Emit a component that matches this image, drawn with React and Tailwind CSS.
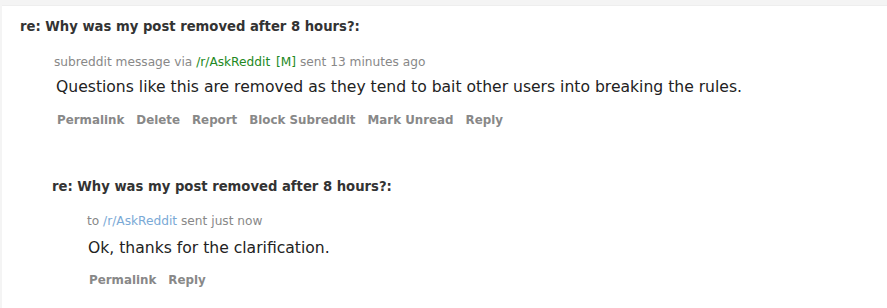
const font = { fontFamily: '"DejaVu Sans", Verdana, sans-serif' };

function Buttons({ items }) {
  return (
    <ul className="flex gap-[12px] text-[11.85px] leading-[18px] font-bold text-[#888]">
      {items.map((item) => (
        <li key={item}>
          <a href="#" className="hover:underline">{item}</a>
        </li>
      ))}
    </ul>
  );
}

export default function App() {
  return (
    <div className="min-h-[308px] bg-[#f4f4f4] pt-[5px] pl-[2px]" style={font}>
      <div className="min-h-[303px] bg-white border-t border-[#eee] pl-[18px] pt-[11px]">
        {/* original message */}
        <div>
          <h3 className="text-[13.2px] font-bold text-[#333] leading-[20px]">
            re: Why was my post removed after 8 hours?:
          </h3>
          <div className="pl-[34px] pt-[16px]">
            <p className="text-[12.2px] text-[#888] leading-[18px]">
              subreddit message via{" "}
              <a href="#" className="text-[#228822]">/r/AskReddit</a>{" "}
              <span className="ml-[2px] text-[#228822]">[M]</span> sent 13 minutes ago
            </p>
            <p className="mt-[4px] text-[15.6px] text-[#222] leading-[24px] pl-[2px]">
              Questions like this are removed as they tend to bait other users into breaking the rules.
            </p>
            <div className="mt-[12px] pl-[3px]">
              <Buttons items={["Permalink", "Delete", "Report", "Block Subreddit", "Mark Unread", "Reply"]} />
            </div>
          </div>
        </div>

        {/* reply */}
        <div className="pl-[32px] pt-[48px]">
          <h3 className="text-[13.2px] font-bold text-[#333] leading-[20px]">
            re: Why was my post removed after 8 hours?:
          </h3>
          <div className="pl-[35px] pt-[15px]">
            <p className="text-[12.2px] text-[#888] leading-[18px]">
              to <a href="#" className="text-[#7aa9d6]">/r/AskReddit</a> sent just now
            </p>
            <p className="mt-[6px] text-[15.6px] text-[#222] leading-[24px] pl-[1px]">
              Ok, thanks for the clarification.
            </p>
            <div className="mt-[11px] pl-[2px]">
              <Buttons items={["Permalink", "Reply"]} />
            </div>
          </div>
        </div>
      </div>
    </div>
  );
}
